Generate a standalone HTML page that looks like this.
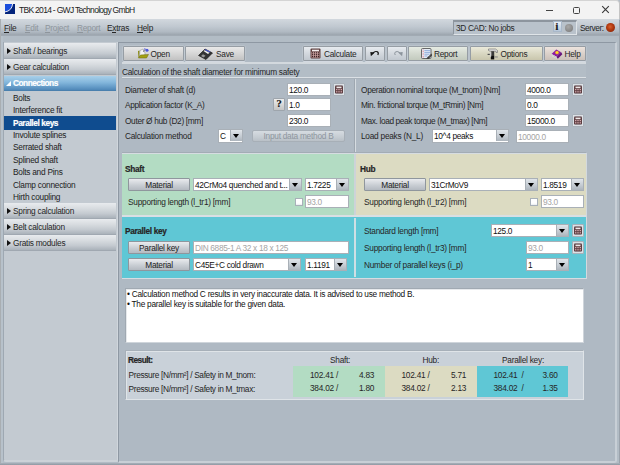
<!DOCTYPE html>
<html><head><meta charset="utf-8">
<style>
*{box-sizing:border-box;margin:0;padding:0}
html,body{width:620px;height:465px;overflow:hidden;background:#b3bcc6;font-family:"Liberation Sans",sans-serif;font-size:8.3px;letter-spacing:-0.25px;color:#262626}
.a{position:absolute}
.t{position:absolute;white-space:nowrap;line-height:10px;height:10px}
.b{font-weight:bold;-webkit-text-stroke:0.2px currentColor}
#title{left:0;top:0;width:620px;height:19px;background:#f3f3f3;border-top:1px solid #d4d4d4;border-top-right-radius:4px;border-right:1.5px solid #c4c4c4}
#menu{left:0;top:19px;width:619px;height:17px;background:linear-gradient(#d2d8de,#c0c8d0 45%,#b0b9c2 75%,#9ea7b0 92%,#a3acb5)}
u{text-decoration:none;border-bottom:0.6px solid currentColor;line-height:7px;display:inline-block}
#frame{left:0;top:36px;width:620px;height:429px;background:#b2bcc5}
#side{left:3px;top:42px;width:115px;height:420px;background:#c3cad1;border-left:1.5px solid #9ea8b2;border-right:1px solid #d0d6dc;border-bottom:2px solid #ccd2d8;border-bottom-left-radius:3px}
.hd{position:absolute;left:0;width:112px;height:16px;background:linear-gradient(#e8ebee,#d8dce0 35%,#c4cad0 70%,#aab2ba);border-bottom:1px solid #a0a8b1}
.hd .tri{position:absolute;left:3px;top:5px;width:0;height:0;border-left:4px solid #111;border-top:3.5px solid transparent;border-bottom:3.5px solid transparent}
.hd span{position:absolute;left:9px;top:2.6px;line-height:10px;white-space:nowrap}
.it{position:absolute;left:9px;margin-top:-0.4px;line-height:10px;white-space:nowrap;color:#222}
#main{left:118px;top:42px;width:499px;height:421px;background:#afb9c3;border-left:1px solid #8e98a3;border-top:1px solid #8e98a3;border-right:2px solid #c8cfd6;border-bottom:2px solid #c8cfd6;border-bottom-right-radius:3px}
.btn{position:absolute;height:14.5px;border:1px solid #969da4;box-shadow:0 1px 0 rgba(235,240,245,0.5),0 0 0 0.5px rgba(230,235,240,0.4);border-radius:1px;background:linear-gradient(#ececec,#d2d2d2 55%,#c0c0c0)}
.btn span{position:absolute;line-height:10px;white-space:nowrap;top:1.6px}
.inp{position:absolute;background:#fff;border:1px solid #a9b0b7;height:13px}
.inp span{position:absolute;left:1px;top:1px;letter-spacing:-0.32px;line-height:10px;white-space:nowrap;color:#111}
.dis span{color:#a4a4a4}
.cb{position:absolute;background:#fff;border:1px solid #a9b0b7;height:13px}
.cb span{position:absolute;left:1px;top:1px;letter-spacing:-0.32px;line-height:10px;white-space:nowrap;color:#111}
.cb i{position:absolute;right:0;top:0;width:12px;height:11px;background:linear-gradient(#e0e5ea,#c3cad1 60%,#adb5bd);border-left:1px solid #a9b0b7}
.cb i:after{content:"";position:absolute;left:1.8px;top:3.8px;border-top:4px solid #000;border-left:3.5px solid transparent;border-right:3.5px solid transparent}
.mb{position:absolute;height:13px;border:1px solid #8f969d;border-radius:1px;background:linear-gradient(#e9ebee,#c7ccd2 60%,#b4bac1)}
.mb span{position:absolute;left:0;right:0;text-align:center;top:1px;line-height:10px;white-space:nowrap;color:#222}
.calc{position:absolute;width:12px;height:13px;border:1px solid #a9b1b9;border-radius:1px;background:#c4cbd3;box-shadow:inset 0 0 0 1px #dce1e6}
.calc svg{left:1.5px;top:1.5px}
.calc svg{position:absolute;left:1px;top:1px}
.chk{position:absolute;width:8px;height:8px;background:linear-gradient(#fff 70%,#e8ebee);border:1px solid #a8b0b8}
</style></head><body>
<div id="title" class="a">
  <svg class="a" style="left:5px;top:3px" width="10" height="10" viewBox="0 0 10 10"><rect width="10" height="10" fill="#03237a"/><path d="M0 0 H7.4 Q6.5 6.5 0 7.6Z" fill="#1c4fdc"/><path d="M7.6 0 Q6.8 6.8 0 7.9" fill="none" stroke="#e8ecf8" stroke-width="1"/></svg>
  <div class="t" style="left:19px;top:3.5px;font-size:8.5px;letter-spacing:-0.7px;color:#222">TBK 2014 - GWJ Technology GmbH</div>
  <div class="a" style="left:546px;top:8.5px;width:6.5px;height:1px;background:#444"></div>
  <div class="a" style="left:573px;top:5.5px;width:7px;height:7px;border:1px solid #444;border-radius:1.5px"></div>
  <svg class="a" style="left:601px;top:4px" width="9" height="9" viewBox="0 0 9 9"><path d="M1.2 1.2 L7.8 7.8 M7.8 1.2 L1.2 7.8" stroke="#383838" stroke-width="1.1"/></svg>
  
</div>
<div id="menu" class="a">
  <div class="t" style="left:4px;top:4px"><u>F</u>ile</div>
  <div class="t" style="left:25px;top:4px;color:#8e959c"><u>E</u>dit</div>
  <div class="t" style="left:45px;top:4px;color:#8e959c"><u>P</u>roject</div>
  <div class="t" style="left:77px;top:4px;color:#8e959c"><u>R</u>eport</div>
  <div class="t" style="left:107px;top:4px">E<u>x</u>tras</div>
  <div class="t" style="left:137px;top:4px"><u>H</u>elp</div>
  <div class="a" style="left:453px;top:1px;width:124px;height:15px;background:#b9c2cb;border-top:2px solid #8d959e;border-left:1px solid #8d959e;border-bottom:1px solid #dfe4e8;border-right:1px solid #dfe4e8"></div>
  <div class="t" style="left:456px;top:3.5px;letter-spacing:-0.32px">3D CAD: No jobs</div>
  <div class="a" style="left:553px;top:2px;width:9px;height:11px;background:linear-gradient(#e8eef5,#b7c6d8);border:1px solid #a9b8c9"></div>
  <div class="t b" style="left:555.5px;top:3px;font-family:'Liberation Serif';font-size:10px;letter-spacing:0;color:#111">i</div>
  <div class="a" style="left:565px;top:4.5px;width:8px;height:8px;border-radius:50%;background:radial-gradient(circle at 40% 35%,#a8a8a8,#777)"></div>
  <div class="t" style="left:580px;top:3.5px;letter-spacing:-0.45px">Server:</div>
  <div class="a" style="left:606px;top:4px;width:9px;height:9px;border-radius:50%;background:radial-gradient(circle at 45% 42%,#d8602e,#b0380f 45%,#7a1e06)"></div>
</div>
<div id="frame" class="a"></div>
<div class="a" style="left:619px;top:20px;width:1px;height:445px;background:#9aa2ab"></div>
<div class="a" style="left:0;top:19px;width:1px;height:446px;background:#a9aeb2"></div>
<div class="a" style="left:1px;top:36px;width:2px;height:427px;background:#b7c1ca"></div>
<div class="a" style="left:0;top:463px;width:620px;height:2px;background:linear-gradient(#a9b2bb,#8f98a2)"></div>
<div id="side" class="a">
  <div class="hd" style="top:1px"><i class="tri"></i><span>Shaft / bearings</span></div>
  <div class="hd" style="top:17px"><i class="tri"></i><span>Gear calculation</span></div>
  <div class="hd" style="top:34px;height:15px;background:linear-gradient(#a8cfe9,#84b7dc 45%,#6299c6 80%,#4f87b7);border-bottom:1px solid #4a80ae"><i style="position:absolute;left:2px;top:5px;border-bottom:5px solid #fff;border-left:5px solid transparent"></i><span class="b" style="color:#fff;letter-spacing:-0.5px;top:2px">Connections</span></div>
  <div class="it" style="top:51px">Bolts</div>
  <div class="it" style="top:63.5px">Interference fit</div>
  <div class="a" style="left:0;top:74px;width:112px;height:13.5px;background:#0f4c8f"></div>
  <div class="it b" style="top:76px;color:#fff;letter-spacing:-0.4px">Parallel keys</div>
  <div class="it" style="top:88px">Involute splines</div>
  <div class="it" style="top:100.5px">Serrated shaft</div>
  <div class="it" style="top:113px">Splined shaft</div>
  <div class="it" style="top:125.5px">Bolts and Pins</div>
  <div class="it" style="top:138px">Clamp connection</div>
  <div class="it" style="top:150.5px">Hirth coupling</div>
  <div class="hd" style="top:161px"><i class="tri"></i><span>Spring calculation</span></div>
  <div class="hd" style="top:177px"><i class="tri"></i><span>Belt calculation</span></div>
  <div class="hd" style="top:193px"><i class="tri"></i><span>Gratis modules</span></div>
</div>
<div id="main" class="a"></div>
<!-- MAIN CONTENT -->
<div class="btn" style="left:122.5px;top:46px;width:61px;background:linear-gradient(#e9e9e9,#d6d6d6 50%,#c2c2c2)"><svg class="a" style="left:13px;top:1px" width="12" height="11" viewBox="0 0 12 11"><path d="M1.5 10 L1 3 L2.5 2.5 L2.5 9Z" fill="#8a8a10"/><path d="M2.5 9 L3 2.5 L6 1 L8 5 L8 7Z" fill="#f4f4f4" stroke="#888" stroke-width="0.5"/><path d="M1.5 10 L3.5 7 L11.5 6.5 L9.5 10Z" fill="#a3a014" stroke="#6b6a0a" stroke-width="0.5"/><path d="M6.5 4 Q6.5 1.5 9 1.5" fill="none" stroke="#666" stroke-width="0.8"/><circle cx="10" cy="2.2" r="1.5" fill="#4a55e0"/><circle cx="7.8" cy="0.9" r="0.9" fill="#8a90e8"/></svg><span style="left:27px">Open</span></div>
<div class="btn" style="left:185px;top:46px;width:60px;background:linear-gradient(#e9e9e9,#d6d6d6 50%,#c2c2c2)"><svg class="a" style="left:12px;top:1px" width="15" height="12" viewBox="0 0 15 12"><path d="M0.5 7.5 L7 1 L14.5 5 L8 11.5 Z" fill="#333" stroke="#111" stroke-width="0.6"/><path d="M6.5 2 L7.5 1.2 L12.5 3.8 L11.5 4.6Z" fill="#4c5ad8"/><path d="M5.5 3 L6.5 2.2 L11.5 4.8 L10 6 Z" fill="#f2f2f2"/><path d="M3 8 L5 6.3 L7.5 7.8 L5.6 9.6Z" fill="#999"/></svg><span style="left:30px">Save</span></div>
<div class="btn" style="left:303px;top:46px;width:60px;background:linear-gradient(#e7ebef,#d3d8de 50%,#c1c8cf)"><svg class="a" style="left:6px;top:1px" width="11" height="11" viewBox="0 0 11 11"><rect x="0.5" y="0.5" width="10" height="10" rx="1" fill="#5e4040" /><rect x="2" y="1.7" width="7" height="1.6" fill="#f3eeee"/><rect x="1.5" y="3.8" width="8" height="5.8" fill="#c9a0a0"/><g fill="#2a1414"><rect x="2" y="4.3" width="1.2" height="1.1"/><rect x="4" y="4.3" width="1.2" height="1.1"/><rect x="6" y="4.3" width="1.2" height="1.1"/><rect x="8" y="4.3" width="1.2" height="1.1"/><rect x="2" y="6.2" width="1.2" height="1.1"/><rect x="4" y="6.2" width="1.2" height="1.1"/><rect x="6" y="6.2" width="1.2" height="1.1"/><rect x="8" y="6.2" width="1.2" height="1.1"/><rect x="2" y="8.1" width="1.2" height="1.1"/><rect x="4" y="8.1" width="1.2" height="1.1"/><rect x="6" y="8.1" width="1.2" height="1.1"/><rect x="8" y="8.1" width="1.2" height="1.1"/></g></svg><span style="left:20px">Calculate</span></div>
<div class="btn" style="left:365px;top:46px;width:20px;background:linear-gradient(#e7ebef,#d3d8de 50%,#c1c8cf)"><svg class="a" style="left:4px;top:3px" width="10" height="7" viewBox="0 0 10 7"><path d="M3 3 Q5 0.8 7.4 1.8 Q9 3 7.8 5" fill="none" stroke="#151515" stroke-width="1.2"/><path d="M0.3 2 L4.8 2.4 L0.9 6.2Z" fill="#151515"/></svg></div>
<div class="btn" style="left:386.5px;top:46px;width:20px;background:linear-gradient(#e7ebef,#d3d8de 50%,#c1c8cf)"><svg class="a" style="left:5px;top:3px" width="10" height="7" viewBox="0 0 10 7"><path d="M7 3 Q5 0.8 2.6 1.8 Q1 3 2.2 5" fill="none" stroke="#8c949c" stroke-width="1"/><path d="M9.7 2 L5.2 2.4 L9.1 6.2Z" fill="#8c949c"/></svg></div>
<div class="btn" style="left:408px;top:46px;width:60px;background:linear-gradient(#e6ebe3,#d3d9cf 50%,#c3cabe)"><svg class="a" style="left:12px;top:1px" width="11" height="11" viewBox="0 0 11 11"><rect x="0.5" y="0.5" width="9.5" height="10" rx="1" fill="#e4ecf6" stroke="#5a5a5a" stroke-width="0.9"/><path d="M2.2 1.5 V10" stroke="#e8a0a8" stroke-width="1.3" stroke-dasharray="1 0.6"/><path d="M3.4 2.6 H9.2 M3.4 4.4 H9.2 M3.4 6.2 H8.5 M3.4 8 H6.5" stroke="#7f9fd4" stroke-width="0.8"/><path d="M5.2 10.6 L10.6 5.6 L10.8 7.8 L7.6 10.8Z" fill="#2e2e2e"/><path d="M7.6 9.6 L9.8 7.6" stroke="#999" stroke-width="0.5"/></svg><span style="left:25px">Report</span></div>
<div class="btn" style="left:470px;top:46px;width:73px;background:linear-gradient(#ebeadb,#d9d7c2 50%,#c9c6ad)"><svg class="a" style="left:16px;top:0.5px" width="12" height="12" viewBox="0 0 12 12"><path d="M1.5 1 L8.5 1 L10.5 2.5 L10.5 4.5 L9 4.5 L9 3.2 L3 3.2 L1.5 2.5Z" fill="#e2e2e2" stroke="#6a6a6a" stroke-width="0.6"/><rect x="4.2" y="3.2" width="3" height="4.6" fill="#3a3a3a"/><rect x="3.8" y="7.6" width="3.4" height="3.8" fill="#0e0e0e"/><rect x="0.6" y="5.8" width="3.4" height="1.2" fill="#4a4a4a"/><rect x="7.2" y="8.4" width="3.6" height="1.1" fill="#8a8a8a"/><rect x="2.8" y="4.2" width="1.4" height="4.6" fill="#cfcfcf"/></svg><span style="left:29.5px">Options</span></div>
<div class="btn" style="left:544px;top:46px;width:42px;background:linear-gradient(#ede4de,#dbd1ca 50%,#cbc1ba)"><svg class="a" style="left:6px;top:1.5px" width="12" height="11" viewBox="0 0 12 11"><defs><radialGradient id="hy" cx="0.5" cy="0.5" r="0.5"><stop offset="0" stop-color="#fff23a"/><stop offset="0.6" stop-color="#f0b020"/><stop offset="1" stop-color="#9a1ab0" stop-opacity="0"/></radialGradient></defs><path d="M0.5 5 L5.3 0.6 L10.2 3.3 L5.6 7.8Z" fill="#8c1ca0"/><path d="M10.2 3.3 L11.3 5.2 L6.6 9.9 L5.6 7.8Z" fill="#65127a"/><path d="M0.5 5 L5.6 7.8 L6.6 9.9 L1.2 7.2Z" fill="#e6e6e6"/><path d="M1.4 6.2 L5.9 8.8" stroke="#999" stroke-width="0.5"/><circle cx="6" cy="3.6" r="2.4" fill="url(#hy)"/></svg><span style="left:19.5px">Help</span></div>
<div class="a" style="left:122px;top:62px;width:464px;height:2px;background:#d3d9de"></div>
<div class="a" style="left:122px;top:64px;width:464px;height:13px;background:#b3bdc6"></div>
<div class="t" style="left:122px;top:66.5px;letter-spacing:-0.27px">Calculation of the shaft diameter for minimum safety</div>
<div class="a" style="left:122px;top:76.5px;width:464px;height:1.5px;background:#dbe0e5"></div>
<div class="a" style="left:122px;top:78px;width:464px;height:1px;background:#a9b2bb"></div>
<!-- form -->
<div class="t" style="left:125px;top:84.5px">Diameter of shaft (d)</div>
<div class="t" style="left:125px;top:100px;letter-spacing:-0.32px">Application factor (K_A)</div>
<div class="t" style="left:125px;top:115.5px;letter-spacing:-0.33px">Outer &Oslash; hub (D2) [mm]</div>
<div class="t" style="left:125px;top:131px">Calculation method</div>
<div class="inp" style="left:287px;top:83px;width:44px"><span>120.0</span></div>
<div class="calc" style="left:333px;top:83px"><svg width="8" height="9" viewBox="0 0 8 9"><rect x="0" y="0.5" width="8" height="8" rx="1.3" fill="#5e3f42"/><rect x="1.5" y="1.6" width="5" height="1.6" fill="#eee6e6"/><g fill="#d4a9ae"><rect x="1" y="4" width="1.4" height="1.2"/><rect x="3.3" y="4" width="1.4" height="1.2"/><rect x="5.6" y="4" width="1.4" height="1.2"/><rect x="1" y="6.2" width="1.4" height="1.2"/><rect x="3.3" y="6.2" width="1.4" height="1.2"/><rect x="5.6" y="6.2" width="1.4" height="1.2"/></g></svg></div>
<div class="mb" style="left:273px;top:98px;width:12px;height:13px;background:linear-gradient(#ececec,#d4d4d4 60%,#c4c4c4);border-color:#9ea5ac"><span class="b" style="font-family:'Liberation Serif';font-size:10.5px;top:0px;letter-spacing:0;color:#111">?</span></div>
<div class="inp" style="left:287px;top:98px;width:44px"><span>1.0</span></div>
<div class="inp" style="left:287px;top:114px;width:44px"><span>230.0</span></div>
<div class="cb" style="left:218px;top:129px;width:25px;height:13.5px"><span>C</span><i></i></div>
<div class="mb" style="left:252px;top:129.5px;width:93px;height:12.5px;background:linear-gradient(#d6dce1,#c6cdd3 60%,#b9c0c7);border-color:#a7afb7;border-radius:2px"><span style="color:#8e969e;top:0.5px">Input data method B</span></div>
<div class="a" style="left:354px;top:79px;width:1px;height:73px;background:#9ea7b0"></div>
<div class="a" style="left:355px;top:79px;width:1px;height:73px;background:#d6dce1"></div>
<div class="t" style="left:361px;top:84.5px;letter-spacing:-0.32px">Operation nominal torque (M_tnom) [Nm]</div>
<div class="t" style="left:361px;top:100px;letter-spacing:-0.36px">Min. frictional torque (M_tRmin) [Nm]</div>
<div class="t" style="left:361px;top:115.5px;letter-spacing:-0.37px">Max. load peak torque (M_tmax) [Nm]</div>
<div class="t" style="left:361px;top:131px">Load peaks (N_L)</div>
<div class="inp" style="left:525px;top:83px;width:44px"><span>4000.0</span></div>
<div class="calc" style="left:572px;top:83px"><svg width="8" height="9" viewBox="0 0 8 9"><rect x="0" y="0.5" width="8" height="8" rx="1.3" fill="#5e3f42"/><rect x="1.5" y="1.6" width="5" height="1.6" fill="#eee6e6"/><g fill="#d4a9ae"><rect x="1" y="4" width="1.4" height="1.2"/><rect x="3.3" y="4" width="1.4" height="1.2"/><rect x="5.6" y="4" width="1.4" height="1.2"/><rect x="1" y="6.2" width="1.4" height="1.2"/><rect x="3.3" y="6.2" width="1.4" height="1.2"/><rect x="5.6" y="6.2" width="1.4" height="1.2"/></g></svg></div>
<div class="inp" style="left:525px;top:98px;width:44px"><span>0.0</span></div>
<div class="inp" style="left:525px;top:114px;width:44px"><span>15000.0</span></div>
<div class="calc" style="left:572px;top:114px"><svg width="8" height="9" viewBox="0 0 8 9"><rect x="0" y="0.5" width="8" height="8" rx="1.3" fill="#5e3f42"/><rect x="1.5" y="1.6" width="5" height="1.6" fill="#eee6e6"/><g fill="#d4a9ae"><rect x="1" y="4" width="1.4" height="1.2"/><rect x="3.3" y="4" width="1.4" height="1.2"/><rect x="5.6" y="4" width="1.4" height="1.2"/><rect x="1" y="6.2" width="1.4" height="1.2"/><rect x="3.3" y="6.2" width="1.4" height="1.2"/><rect x="5.6" y="6.2" width="1.4" height="1.2"/></g></svg></div>
<div class="cb" style="left:432px;top:129px;width:77px;height:13.5px"><span>10^4 peaks</span><i></i></div>
<div class="inp dis" style="left:516px;top:130px;width:53px"><span>10000.0</span></div>
<div class="a" style="left:122px;top:152px;width:464px;height:1px;background:#a3acb5"></div>
<div class="a" style="left:122px;top:153px;width:464px;height:1px;background:#d6dce1"></div>
<!-- shaft -->
<div class="a" style="left:122px;top:154px;width:232px;height:61px;background:#b3dcc3"></div>
<div class="a" style="left:354px;top:154px;width:1.5px;height:61px;background:#cdd3d8"></div>
<div class="a" style="left:356px;top:154px;width:230px;height:61px;background:#dcdbc2"></div>
<div class="t b" style="left:125px;top:163.5px;letter-spacing:-0.3px">Shaft</div>
<div class="mb" style="left:128px;top:178px;width:62px"><span>Material</span></div>
<div class="cb" style="left:193px;top:178px;width:109px"><span style="letter-spacing:-0.32px">42CrMo4 quenched and t...</span><i></i></div>
<div class="cb" style="left:305px;top:178px;width:44px"><span>1.7225</span><i></i></div>
<div class="t" style="left:128px;top:197px">Supporting length (l_tr1) [mm]</div>
<div class="chk" style="left:295px;top:198px"></div>
<div class="inp dis" style="left:305px;top:195px;width:44px"><span>93.0</span></div>
<div class="t b" style="left:360px;top:163.5px;letter-spacing:-0.3px">Hub</div>
<div class="mb" style="left:364px;top:178px;width:62px"><span>Material</span></div>
<div class="cb" style="left:429px;top:178px;width:109px"><span>31CrMoV9</span><i></i></div>
<div class="cb" style="left:541px;top:178px;width:43px"><span>1.8519</span><i></i></div>
<div class="t" style="left:364px;top:197px">Supporting length (l_tr2) [mm]</div>
<div class="chk" style="left:530px;top:198px"></div>
<div class="inp dis" style="left:541px;top:195px;width:43px"><span>93.0</span></div>
<div class="a" style="left:122px;top:215px;width:464px;height:2px;background:#d9dfe3"></div>
<!-- parallel key -->
<div class="a" style="left:122px;top:217px;width:464px;height:61px;background:#5fc7d5"></div>
<div class="a" style="left:354px;top:218px;width:1.5px;height:59px;background:#cfdfe4"></div>
<div class="a" style="left:122px;top:278px;width:465px;height:1px;background:#d6dce1"></div>
<div class="a" style="left:586px;top:153px;width:1px;height:126px;background:#d3d9de"></div>
<div class="t b" style="left:125px;top:225.5px;letter-spacing:-0.35px">Parallel key</div>
<div class="mb" style="left:128px;top:241px;width:62px"><span>Parallel key</span></div>
<div class="inp dis" style="left:193px;top:241px;width:156px"><span>DIN 6885-1 A 32 x 18 x 125</span></div>
<div class="mb" style="left:128px;top:258px;width:62px"><span>Material</span></div>
<div class="cb" style="left:193px;top:258px;width:108px"><span>C45E+C cold drawn</span><i></i></div>
<div class="cb" style="left:305px;top:258px;width:42px"><span>1.1191</span><i></i></div>
<div class="t" style="left:364px;top:225.5px">Standard length [mm]</div>
<div class="t" style="left:364px;top:242.5px">Supporting length (l_tr3) [mm]</div>
<div class="t" style="left:364px;top:259.8px">Number of parallel keys (i_p)</div>
<div class="cb" style="left:491px;top:224px;width:78px"><span>125.0</span><i></i></div>
<div class="calc" style="left:572px;top:224px"><svg width="8" height="9" viewBox="0 0 8 9"><rect x="0" y="0.5" width="8" height="8" rx="1.3" fill="#5e3f42"/><rect x="1.5" y="1.6" width="5" height="1.6" fill="#eee6e6"/><g fill="#d4a9ae"><rect x="1" y="4" width="1.4" height="1.2"/><rect x="3.3" y="4" width="1.4" height="1.2"/><rect x="5.6" y="4" width="1.4" height="1.2"/><rect x="1" y="6.2" width="1.4" height="1.2"/><rect x="3.3" y="6.2" width="1.4" height="1.2"/><rect x="5.6" y="6.2" width="1.4" height="1.2"/></g></svg></div>
<div class="inp dis" style="left:526px;top:241px;width:43px"><span>93.0</span></div>
<div class="calc" style="left:572px;top:241px"><svg width="8" height="9" viewBox="0 0 8 9"><rect x="0" y="0.5" width="8" height="8" rx="1.3" fill="#5e3f42"/><rect x="1.5" y="1.6" width="5" height="1.6" fill="#eee6e6"/><g fill="#d4a9ae"><rect x="1" y="4" width="1.4" height="1.2"/><rect x="3.3" y="4" width="1.4" height="1.2"/><rect x="5.6" y="4" width="1.4" height="1.2"/><rect x="1" y="6.2" width="1.4" height="1.2"/><rect x="3.3" y="6.2" width="1.4" height="1.2"/><rect x="5.6" y="6.2" width="1.4" height="1.2"/></g></svg></div>
<div class="cb" style="left:526px;top:258px;width:43px"><span>1</span><i></i></div>
<!-- messages -->
<div class="a" style="left:125px;top:287.5px;width:459px;height:55.5px;background:#fff;border:1px solid #a0a9b2;border-right-color:#cfd5db;border-bottom-color:#cfd5db;box-shadow:inset 1px 1px 0 #e6e9ec"></div>
<div class="t" style="left:127px;top:288.7px;letter-spacing:-0.27px;color:#111">&bull; Calculation method C results in very inaccurate data. It is advised to use method B.</div>
<div class="t" style="left:127px;top:298.8px;letter-spacing:-0.27px;color:#111">&bull; The parallel key is suitable for the given data.</div>
<!-- results -->
<div class="a" style="left:125px;top:349.5px;width:459px;height:50px;background:#c9d1d9;border:1px solid #a7b0b9;border-right-color:#dfe4e8;border-bottom-color:#dfe4e8;box-shadow:inset 1px 1px 0 #dfe4e8"></div>
<div class="t b" style="left:128px;top:354.5px;letter-spacing:-0.5px">Result:</div>
<div class="t" style="left:128.5px;top:370px;letter-spacing:-0.33px">Pressure [N/mm&sup2;] / Safety in M_tnom:</div>
<div class="t" style="left:128.5px;top:383.5px;letter-spacing:-0.33px">Pressure [N/mm&sup2;] / Safety in M_tmax:</div>
<div class="t" style="left:330px;top:355px">Shaft:</div>
<div class="t" style="left:422.5px;top:355px">Hub:</div>
<div class="t" style="left:502px;top:355px">Parallel key:</div>
<div class="a" style="left:293px;top:366px;width:92px;height:31px;background:#b3dcc3"></div>
<div class="a" style="left:385px;top:366px;width:92px;height:31px;background:#dcdbc2"></div>
<div class="a" style="left:477px;top:366px;width:91px;height:31px;background:#5fc7d5"></div>
<div class="t" style="left:310px;top:370px">102.41 /</div>
<div class="t" style="left:359px;top:370px">4.83</div>
<div class="t" style="left:310px;top:383px">384.02 /</div>
<div class="t" style="left:359px;top:383px">1.80</div>
<div class="t" style="left:401.5px;top:370px">102.41 /</div>
<div class="t" style="left:451px;top:370px">5.71</div>
<div class="t" style="left:401.5px;top:383px">384.02 /</div>
<div class="t" style="left:451px;top:383px">2.13</div>
<div class="t" style="left:493.5px;top:370px">102.41&nbsp; /</div>
<div class="t" style="left:542.5px;top:370px">3.60</div>
<div class="t" style="left:493.5px;top:383px">384.02&nbsp; /</div>
<div class="t" style="left:542.5px;top:383px">1.35</div>

</body></html>
